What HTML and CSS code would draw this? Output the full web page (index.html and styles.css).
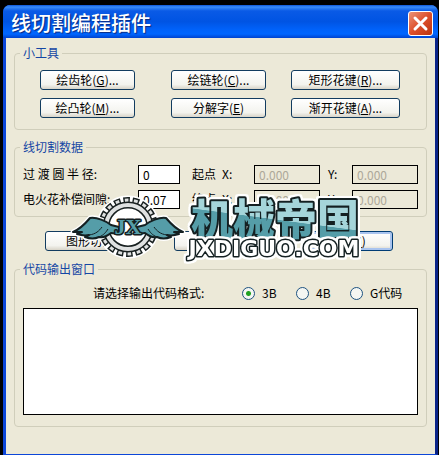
FILE: index.html
```html
<!DOCTYPE html>
<html lang="zh-CN">
<head>
<meta charset="utf-8">
<title>线切割编程插件</title>
<link rel="stylesheet" href="styles.css">
</head>
<body>
<main class="window">
  <header class="titlebar">
    <h1>线切割编程插件</h1>
    <button class="close" type="button" aria-label="关闭">
      <svg viewBox="0 0 23 23" aria-hidden="true"><path d="M6 6 17 17M17 6 6 17"/></svg>
    </button>
  </header>
  <form class="content">
    <fieldset class="group tools">
      <legend>小工具</legend>
      <div class="tool-grid">
        <button type="button">绘齿轮(<u>G</u>)...</button>
        <button type="button">绘链轮(<u>C</u>)...</button>
        <button type="button" class="wide">矩形花键(<u>R</u>)...</button>
        <button type="button">绘凸轮(<u>M</u>)...</button>
        <button type="button">分解字(<u>E</u>)</button>
        <button type="button" class="wide">渐开花键(<u>A</u>)...</button>
      </div>
    </fieldset>
    <fieldset class="group data">
      <legend>线切割数据</legend>
      <div class="data-grid">
        <label for="radius">过 渡 圆 半 径:</label>
        <input id="radius" value="0">
        <span>起点</span>
        <label for="sx">X:</label><input id="sx" value="0.000" disabled>
        <label class="y-label" for="sy">Y:</label><input id="sy" value="0.000" disabled>
        <label for="gap">电火花补偿间隙:</label>
        <input id="gap" value="0.07">
        <span>终点</span>
        <label for="ex">X:</label><input id="ex" value="0.000" disabled>
        <label class="y-label" for="ey">Y:</label><input id="ey" value="0.000" disabled>
      </div>
    </fieldset>
    <div class="actions">
      <button type="button">图形切割</button>
      <button type="button" aria-label="生成代码"></button>
      <button type="button" class="default">退出(<u>I</u>)</button>
      <svg class="brand" viewBox="0 0 296 66" role="img" aria-label="JX 机械帝国">
        <defs>
          <linearGradient id="teal" gradientUnits="userSpaceOnUse" x1="207" y1="-6" x2="199" y2="54">
            <stop offset="0.5" stop-color="#a5d5da"/><stop offset="0.51" stop-color="#559da8"/>
          </linearGradient>
          <path id="wing" d="M2 37C9 34 14 29 19 23C26 22 35 26 40 30L48 32V39L40 38C36 41 33 43 28 42C24 44 19 44 14 42L18 40C13 41 9 40 6 39L11 37Z"/>
          <path id="feathers" d="M18 40C25 39 28 36 31 32M28 42C33 40 35 37 37 34"/>
        </defs>
        <g class="halo">
          <circle cx="57" cy="32" r="29"/>
          <use href="#wing"/><use href="#wing" transform="translate(114 0) scale(-1 1)"/>
        </g>
        <g class="gear">
          <circle class="tooth-edge" cx="57" cy="32" r="25" pathLength="180"/>
          <circle class="tooth" cx="57" cy="32" r="25" pathLength="180"/>
          <circle class="ring-edge" cx="57" cy="32" r="22"/>
          <circle class="ring" cx="57" cy="32" r="22"/>
        </g>
        <g class="wings">
          <use href="#wing"/><use href="#wing" transform="translate(114 0) scale(-1 1)"/>
        </g>
        <g class="feathers">
          <use href="#feathers"/><use href="#feathers" transform="translate(114 0) scale(-1 1)"/>
        </g>
        <text class="monogram" x="57" y="39">JX</text>
        <text class="name" x="204" y="40">机械帝国</text>
        <text class="domain" x="203" y="61">JXDIGUO.COM</text>
      </svg>
    </div>
    <fieldset class="group output">
      <legend>代码输出窗口</legend>
      <div class="formats" role="radiogroup" aria-labelledby="format-title">
        <span id="format-title">请选择输出代码格式:</span>
        <label><input type="radio" name="format" checked>3B</label>
        <label><input type="radio" name="format">4B</label>
        <label><input type="radio" name="format">G代码</label>
      </div>
      <textarea aria-label="代码输出窗口"></textarea>
    </fieldset>
  </form>
</main>
</body>
</html>
```

FILE: styles.css
```css
* { box-sizing: border-box; }

body {
  margin: 0;
  padding: 5px 1px 0 3px;
  min-height: 100vh;
  display: flex;
  background: #000;
  color: #000;
  font: 12px/16px "Noto Sans CJK SC", sans-serif;
}

.window {
  flex: 1;
  display: flex;
  flex-direction: column;
  background: #ece9d8;
  border: 3px solid #0c46d8;
  border-right-color: #0a2488;
  border-top: 0;
  border-bottom-width: 1px;
  border-radius: 7px 7px 0 0;
}

.titlebar {
  display: flex;
  align-items: center;
  justify-content: space-between;
  height: 33px;
  margin: 0 -3px;
  padding: 3px 5px 0 8px;
  border-radius: 7px 7px 0 0;
  background: linear-gradient(#0b54d8, #3a8cf8 6%, #0a5ae6 18%, #0054e3 50%, #0062fa 75%, #0066ff 88%, #0043cf);
}

h1 {
  margin: 0;
  color: #fff;
  font-size: 20px;
  line-height: 28px;
  font-weight: 500;
  text-shadow: 1px 1px 1px #0a2a80;
}

.close {
  width: 25px;
  height: 25px;
  padding: 0;
  border: 1px solid #fff;
  border-radius: 3px;
  background: linear-gradient(135deg, #eb9478, #dd4f2b 50%, #b93310);
}

.close svg { display: block; width: 100%; height: 100%; }
.close path { fill: none; stroke: #fff; stroke-width: 3; stroke-linecap: round; }

.content { padding: 7px 8px 0; }

.group {
  min-width: 0;
  margin: 0;
  padding: 0 8px;
  border: 1px solid #d0cebb;
  border-radius: 4px;
}

legend {
  margin-left: -3px;
  padding: 0 3px;
  color: #1546a4;
  line-height: 16px;
}

.content button {
  height: 20px;
  padding: 0;
  border: 1px solid #123c60;
  border-radius: 3px;
  background: linear-gradient(#fff, #f3f3ee 75%, #d8d4c8);
  color: #000;
  font: inherit;
  line-height: 16px;
}

.tools { padding-bottom: 11px; }

.tool-grid {
  display: grid;
  grid-template-columns: 131fr 120fr 118fr;
  justify-items: start;
  gap: 8px 0;
  padding: 9px 9px 0 17px;
}

.tool-grid button { width: 95px; }
.tool-grid .wide { width: 109px; }

.data { margin-top: 9px; padding-bottom: 7px; }

.data-grid {
  display: grid;
  grid-template-columns: 115px 54px 30px 32px 66fr 32px 66fr;
  align-items: center;
  gap: 6px 0;
  padding-top: 10px;
}

.data-grid label, .data-grid span { line-height: 14px; padding-bottom: 2px; }

.data-grid input {
  width: 100%;
  height: 19px;
  min-width: 0;
  padding: 0 4px;
  border: 1px solid #000;
  border-radius: 0;
  background: #fff;
  font: inherit;
}

.data-grid #radius, .data-grid #gap { width: 42px; }
.data-grid input:disabled { background: transparent; color: #aca899; }
.data-grid .y-label { padding-left: 8px; }

.actions {
  position: relative;
  display: flex;
  justify-content: space-between;
  padding: 14px 34px 10px 31px;
}

.actions button { width: 90px; }

.content .default {
  border-color: #003c74;
  box-shadow: inset 0 0 0 2px #a9c4ef;
}

.brand {
  position: absolute;
  left: 57px;
  top: -22px;
  width: 296px;
  height: 66px;
  overflow: visible;
}

.halo { fill: #fff; stroke: #fff; stroke-width: 5; stroke-linejoin: round; }
.gear circle { fill: none; }
.gear .tooth-edge { stroke: #182020; stroke-width: 10; stroke-dasharray: 7 3; }
.gear .tooth { stroke: #dfe1e1; stroke-width: 7; stroke-dasharray: 4 6; stroke-dashoffset: -1.5; }
.gear .ring-edge { stroke: #182020; stroke-width: 7; }
.gear .ring { stroke: #dfe1e1; stroke-width: 4; }
.wings { fill: #559da8; stroke: #142022; stroke-width: 2; stroke-linejoin: round; }
.feathers { fill: none; stroke: #142022; stroke-width: 1; }

.brand text { text-anchor: middle; paint-order: stroke; stroke-linejoin: round; }
.monogram { font: 700 22px "Liberation Serif", serif; fill: #559da8; stroke: #142022; stroke-width: 3px; }
.name { font: 900 42px "Noto Sans CJK SC", sans-serif; fill: url(#teal); stroke: #142022; stroke-width: 4px; }
.domain { font: 700 22px "DejaVu Sans", sans-serif; fill: #fff; stroke: #142022; stroke-width: 3px; }

.name, .domain {
  filter: drop-shadow(2px 0 #fff) drop-shadow(-2px 0 #fff) drop-shadow(0 2px #fff) drop-shadow(0 -2px #fff);
}

.output { padding-bottom: 11px; }

.formats {
  display: flex;
  align-items: center;
  padding: 8px 0 7px 70px;
}

#format-title { width: 149px; }

.formats label { display: flex; align-items: center; gap: 7px; width: 54px; white-space: nowrap; }

.formats input {
  appearance: none;
  flex: none;
  width: 13px;
  height: 13px;
  margin: 0;
  border: 1px solid #1d5281;
  border-radius: 50%;
  background: #f4f6f2;
}

.formats input:checked { background: radial-gradient(circle, #21a121 0 2px, #f4f6f2 3px); }

textarea {
  display: block;
  width: 100%;
  height: 107px;
  border: 1px solid #000;
  border-radius: 0;
  background: #fff;
  resize: none;
  font: inherit;
}
```
